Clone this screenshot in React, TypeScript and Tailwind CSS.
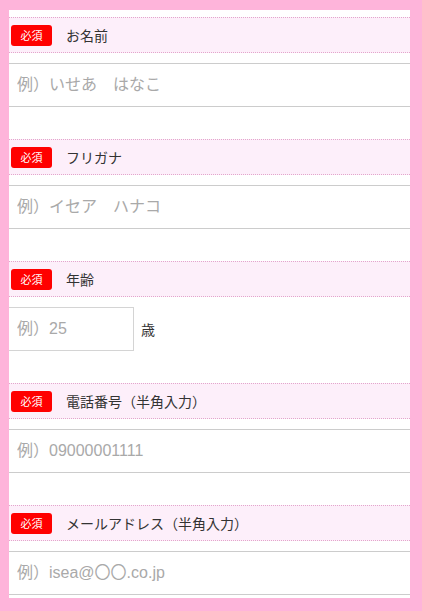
import React from "react";

const font = { fontFamily: '"Noto Sans CJK JP", sans-serif' };

function Header({ label }: { label: string }) {
  return (
    <div className="flex h-[36px] items-center border-y border-dotted border-[#e3a6cc] bg-[#fdeffa]">
      <span className="ml-[2px] flex h-[21px] w-[41px] items-center justify-center rounded-[3px] bg-[#ff0000] text-[11px] leading-none text-white">
        必須
      </span>
      <span className="ml-[14px] text-[14px] leading-none text-[#333]">{label}</span>
    </div>
  );
}

function FullInput({ ph }: { ph: string }) {
  return (
    <input
      readOnly
      placeholder={ph}
      className="mt-[10px] block h-[44px] w-full border-y border-[#cccccc] bg-white px-[8px] text-[16px] outline-none placeholder:text-[#a9a9a9]"
      style={{ fontFamily: '"Liberation Sans", "Noto Sans CJK JP", sans-serif' }}
    />
  );
}

export default function App() {
  return (
    <div className="min-h-[611px] bg-[#feb4da] pb-[14px] pl-[9px] pr-[12px] pt-[10px]" style={font}>
      <div className="bg-white pb-[3px] pt-[7px]">
        <Header label="お名前" />
        <FullInput ph="例）いせあ　はなこ" />
        <div className="h-[32px]" />
        <Header label="フリガナ" />
        <FullInput ph="例）イセア　ハナコ" />
        <div className="h-[32px]" />
        <Header label="年齢" />
        <div className="mt-[10px] flex items-center">
          <input
            readOnly
            placeholder="例）25"
            className="block h-[44px] w-[125px] border border-l-0 border-[#d4d4d4] bg-white px-[8px] text-[16px] outline-none placeholder:text-[#a9a9a9]"
            style={{ fontFamily: '"Liberation Sans", "Noto Sans CJK JP", sans-serif' }}
          />
          <span className="ml-[7px] text-[14px] text-[#333]">歳</span>
        </div>
        <div className="h-[32px]" />
        <Header label="電話番号（半角入力）" />
        <FullInput ph="例）09000001111" />
        <div className="h-[32px]" />
        <Header label="メールアドレス（半角入力）" />
        <FullInput ph="例）isea@〇〇.co.jp" />
      </div>
    </div>
  );
}
